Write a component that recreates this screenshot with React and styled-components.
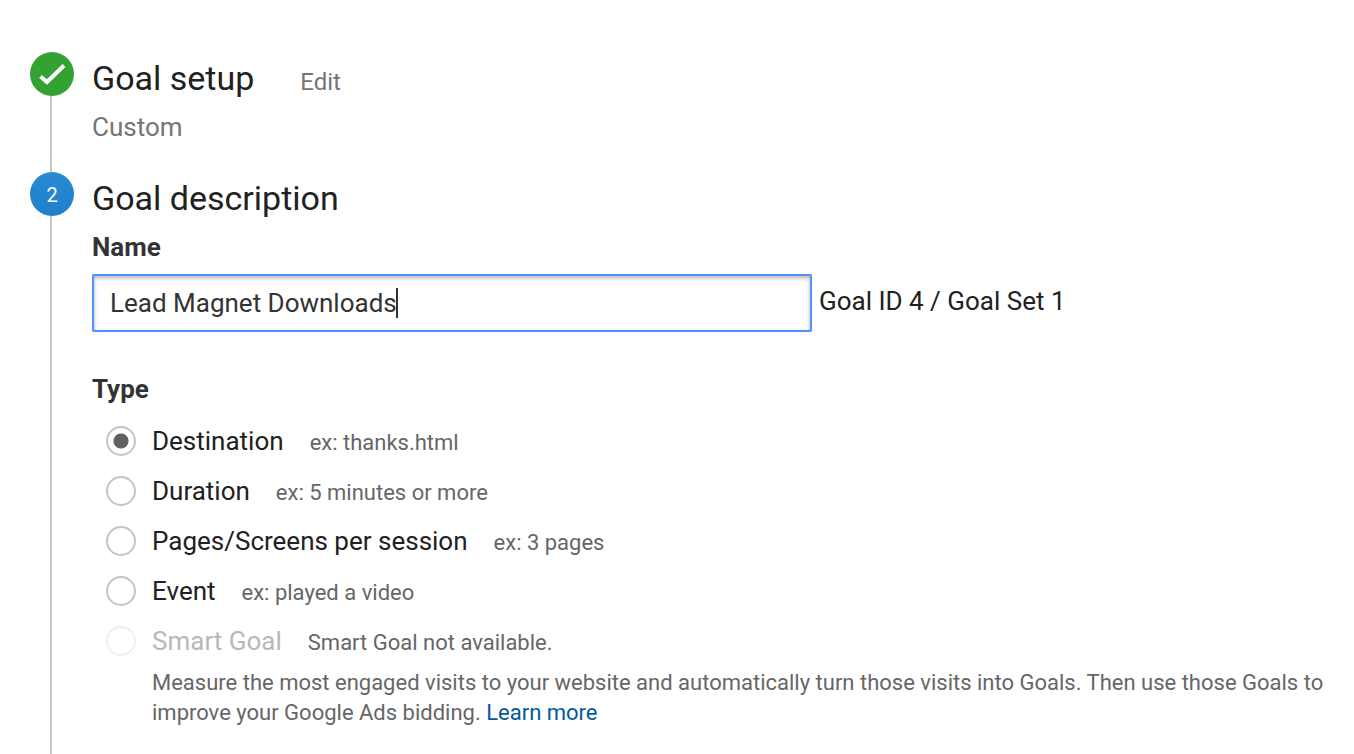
import React, { useLayoutEffect, useState } from 'react'
import styled, { createGlobalStyle } from 'styled-components';

const goalTypes = [
  { id: 'destination', label: 'Destination', hint: 'ex: thanks.html' },
  { id: 'duration', label: 'Duration', hint: 'ex: 5 minutes or more' },
  { id: 'pages', label: 'Pages/Screens per session', hint: 'ex: 3 pages' },
  { id: 'event', label: 'Event', hint: 'ex: played a video' },
  { id: 'smart', label: 'Smart Goal', hint: 'Smart Goal not available.', disabled: true },
];

const fontFamily = 'Roboto, "Liberation Sans", sans-serif';

const measure = text => {
  const context = document.createElement('canvas').getContext('2d');
  context.font = `26px ${fontFamily}`;
  return Math.floor(context.measureText(text).width);
}

const App = () => {
  const [name, setName] = useState('Lead Magnet Downloads');
  const [cursor, setCursor] = useState(name.length);
  const [caretLeft, setCaretLeft] = useState(0);
  const [type, setType] = useState('destination');

  // the caret follows the text in front of the cursor
  useLayoutEffect(() => {
    setCaretLeft(18 + measure(name.slice(0, cursor)));
  }, [name, cursor]);

  const handleName = e => {
    setName(e.target.value);
    setCursor(e.target.selectionStart);
  }

  return (
    <>
      <GlobalStyle />
      <Wizard>
        <Step>
          <Rail>
            <Badge $done>
              <svg width="44" height="44" viewBox="0 0 44 44" aria-hidden="true">
                <path d="M10.5 24.5 L17 30 L34 13.5" fill="none" stroke="#fff" strokeWidth="4" />
              </svg>
            </Badge>
            <Line />
          </Rail>
          <Content>
            <TitleRow>
              <Title>Goal setup</Title>
              <EditButton type="button">Edit</EditButton>
            </TitleRow>
            <Summary>Custom</Summary>
          </Content>
        </Step>

        <Step $last>
          <Rail>
            <Badge>2</Badge>
            <Line />
          </Rail>
          <Content>
            <TitleRow>
              <Title>Goal description</Title>
            </TitleRow>
            <FieldLabel htmlFor="goal-name">Name</FieldLabel>
            <NameRow>
              <InputBox>
                <NameInput
                  id="goal-name"
                  value={name}
                  onChange={handleName}
                  onKeyUp={e => setCursor(e.target.selectionStart)}
                  onClick={e => setCursor(e.target.selectionStart)}
                />
                <Caret style={{ left: caretLeft }} />
              </InputBox>
              <GoalId>Goal ID 4 / Goal Set 1</GoalId>
            </NameRow>

            <TypeGroup>
              <Legend>Type</Legend>
              {goalTypes.map(item => (
                <Option key={item.id}>
                  <Radio
                    id={item.id}
                    type="radio"
                    name="goal-type"
                    checked={type === item.id}
                    disabled={item.disabled}
                    onChange={() => setType(item.id)}
                  />
                  <OptionLabel htmlFor={item.id} $disabled={item.disabled}>{item.label}</OptionLabel>
                  <Hint>{item.hint}</Hint>
                </Option>
              ))}
              <Description>
                Measure the most engaged visits to your website and automatically turn those visits into Goals. Then use those Goals to improve your Google Ads bidding. <LearnMore href="#">Learn more</LearnMore>
              </Description>
            </TypeGroup>
          </Content>
        </Step>
      </Wizard>
    </>
  )
}

const GlobalStyle = createGlobalStyle`
  * {
    box-sizing: border-box;
  }

  body {
    margin: 0;
    background: #fff;
    color: #212121;
    font-family: ${fontFamily};
  }

  html, body, #root {
    height: 100%;
  }
`;

const Wizard = styled.main`
  min-height: 100%;
  padding: 52px 24px 0 30px;
  display: flex;
  flex-direction: column;
`;

const Step = styled.section`
  display: flex;
  gap: 18px;
  flex: ${props => props.$last ? "1" : "none"};
`;

const Rail = styled.div`
  width: 44px;
  flex: none;
  display: flex;
  flex-direction: column;
  align-items: center;
`;

const Badge = styled.div`
  width: 44px;
  height: 44px;
  border-radius: 50%;
  background: ${props => props.$done ? "#34a233" : "linear-gradient(#288bd3, #207fcb)"};
  color: #fff;
  font-size: 20px;
  line-height: 46px;
  text-align: center;

  svg {
    display: block;
  }
`;

const Line = styled.div`
  width: 2px;
  flex: 1;
  margin-right: 2px;
  background: #c8c8c8;
`;

const Content = styled.div`
  flex: 1;
  min-width: 0;
`;

const TitleRow = styled.div`
  display: flex;
  align-items: baseline;
  gap: 46px;
  line-height: 52px;
`;

const Title = styled.h2`
  margin: 0;
  font-size: 34px;
  font-weight: 400;
`;

const EditButton = styled.button`
  padding: 0;
  border: 0;
  background: none;
  color: #757575;
  font-family: inherit;
  font-size: 24px;
  cursor: pointer;
`;

const Summary = styled.div`
  height: 68px;
  color: #757575;
  font-size: 26px;
  line-height: 46px;
`;

const FieldLabel = styled.label`
  display: block;
  color: #333;
  font-size: 26px;
  font-weight: 700;
  line-height: 46px;
`;

const NameRow = styled.div`
  display: flex;
  flex-wrap: wrap;
  gap: 7px;
  margin-top: 4px;
`;

const InputBox = styled.div`
  position: relative;
  width: 720px;
  max-width: 100%;
`;

const NameInput = styled.input`
  display: block;
  width: 100%;
  height: 58px;
  padding: 0 16px;
  border: 2px solid #4d90fe;
  border-radius: 2px;
  outline: none;
  box-shadow: inset 0 2px 4px rgba(0, 0, 0, 0.3);
  caret-color: transparent;
  color: #333;
  font-family: inherit;
  font-size: 26px;
`;

const Caret = styled.span`
  position: absolute;
  top: 14px;
  width: 2px;
  height: 30px;
  background: #333;
  pointer-events: none;
`;

const GoalId = styled.div`
  font-size: 26px;
  line-height: 54px;
`;

const TypeGroup = styled.fieldset`
  min-width: 0;
  margin: 36px 0 0;
  padding: 0;
  border: 0;
`;

const Legend = styled.legend`
  padding: 0;
  margin-bottom: 6px;
  color: #333;
  font-size: 26px;
  font-weight: 700;
  line-height: 42px;
`;

const Option = styled.div`
  display: flex;
  align-items: center;
  height: 50px;
  padding-left: 14px;
`;

const Radio = styled.input`
  appearance: none;
  flex: none;
  width: 30px;
  height: 30px;
  margin: 0 16px 0 0;
  border: 2px solid #c4c4c4;
  border-radius: 50%;
  background: #fff;

  &:checked {
    background: radial-gradient(circle, #606060 7px, #fff 8px);
  }

  &:disabled {
    border-color: #eee;
  }
`;

const OptionLabel = styled.label`
  color: ${props => props.$disabled ? "#b8b8b8" : "#212121"};
  font-size: 26px;
  line-height: 50px;
`;

const Hint = styled.span`
  margin-left: 26px;
  padding-top: 4px;
  color: #666;
  font-size: 22px;
  line-height: 30px;
`;

const Description = styled.p`
  margin: 2px 0 0;
  padding-left: 60px;
  color: #666;
  font-size: 22px;
  line-height: 30px;
`;

const LearnMore = styled.a`
  color: #015a9c;
  text-decoration: none;
`;

export default App
